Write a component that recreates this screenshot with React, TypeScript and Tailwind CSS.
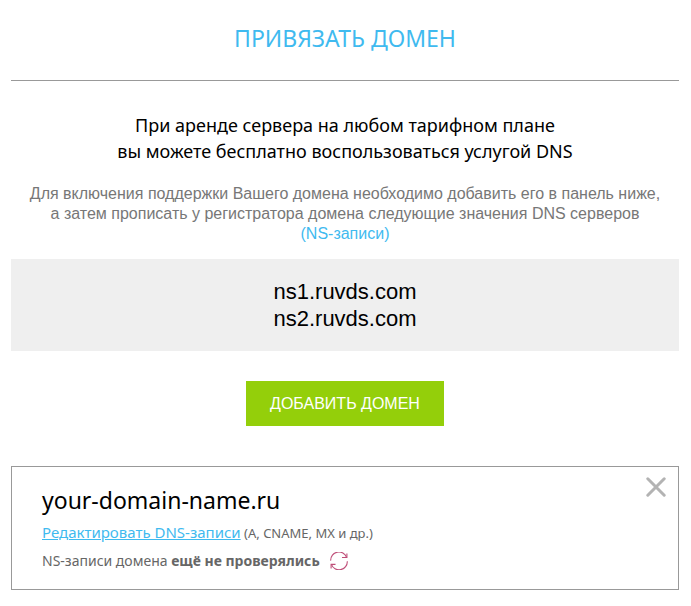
const nameServers = ['ns1.ruvds.com', 'ns2.ruvds.com'];

function CloseIcon() {
  return (
    <svg className="block h-5 w-5" viewBox="0 0 20 20" fill="none" stroke="#b3b3b3" strokeWidth="3" strokeLinecap="round">
      <path d="M1.8 1.8 18.2 18.2M18.2 1.8 1.8 18.2" />
    </svg>
  );
}

function RefreshIcon() {
  return (
    <svg className="block h-[18px] w-[18px]" viewBox="0 0 18 18" fill="none" stroke="#bf4f79" strokeWidth="1.1">
      <path d="M.7 8.6A8.2 8.2 0 0 1 16.6 5.4M17.3 9.2A8.2 8.2 0 0 1 1.4 12.4" />
      <path d="M16.9 1.4v4.1H12M1.1 16.4v-4H5.5" />
    </svg>
  );
}

function DomainCard({ name }: { name: string }) {
  return (
    <section className="relative mt-10 border border-[#999] px-[30px] py-4 text-[#666]">
      <h2 className="text-[23px] leading-[34px] text-black">{name}</h2>
      <p className="mt-[3px] text-[13px] leading-6">
        <a href="#records" className="text-[15px] text-[#3fbaef] underline">
          Редактировать DNS-записи
        </a>{' '}
        (A, CNAME, MX и др.)
      </p>
      <div className="mt-1 flex items-center gap-[10px] text-sm leading-6">
        <p>
          NS-записи домена <b>ещё не проверялись</b>
        </p>
        <button type="button" aria-label="Проверить">
          <RefreshIcon />
        </button>
      </div>
      <button type="button" aria-label="Удалить домен" className="absolute top-[10px] right-3">
        <CloseIcon />
      </button>
    </section>
  );
}

export default function App() {
  return (
    <main className="bg-white pt-[22px] pr-3 pb-4 pl-[11px] font-['Noto_Sans',sans-serif]">
      <h1 className="text-center text-[23px] leading-8 text-[#3fbaef]">ПРИВЯЗАТЬ ДОМЕН</h1>
      <hr className="mt-[26px] border-[#999]" />

      <p className="mt-[31px] text-center text-lg leading-[26px] text-black">
        При аренде сервера на любом тарифном плане
        <br />
        вы можете бесплатно воспользоваться услугой DNS
      </p>

      <div className="font-['Liberation_Sans',Arial,sans-serif]">
        <p className="mt-5 text-center text-base leading-5 text-[#777]">
          Для включения поддержки Вашего домена необходимо добавить его в панель ниже,
          <br />а затем прописать у регистратора домена следующие значения DNS серверов
          <br />
          <a href="#ns" className="text-[#3fbaef]">
            (NS-записи)
          </a>
        </p>

        <div className="mt-[15px] bg-[#efefef] py-[19px] text-center text-[22px] leading-[27px] text-black">
          {nameServers.map((server) => (
            <p key={server}>{server}</p>
          ))}
        </div>

        <button
          type="button"
          className="mx-auto mt-[30px] block h-[45px] bg-[#94cf0a] px-6 text-base text-white"
        >
          ДОБАВИТЬ ДОМЕН
        </button>
      </div>

      <DomainCard name="your-domain-name.ru" />
    </main>
  );
}
